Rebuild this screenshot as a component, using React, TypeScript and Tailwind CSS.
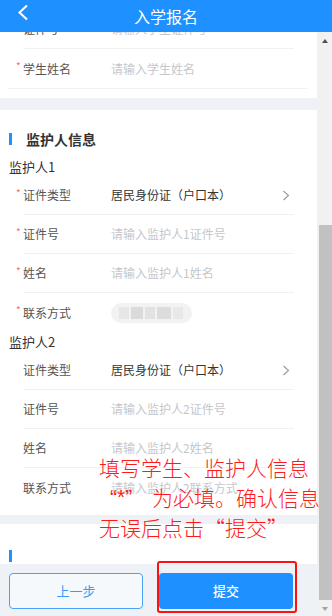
import React from 'react'

const font = { fontFamily: '"Noto Sans CJK SC", "Microsoft YaHei", sans-serif' }

interface RowProps {
  label: string
  required?: boolean
  value?: string
  placeholder?: string
  arrow?: boolean
  border?: boolean
  blurred?: boolean
}

function Chevron() {
  return (
    <svg width="8" height="11" viewBox="0 0 8 11" className="mr-[4px] shrink-0">
      <polyline points="1.5,1 6.5,5.5 1.5,10" fill="none" stroke="#9a9a9a" strokeWidth="1.1" />
    </svg>
  )
}

function Row({ label, required, value, placeholder, arrow, border = true, blurred }: RowProps) {
  return (
    <div className="flex pl-[16px] pr-[23px]">
      <span className="w-[7px] pt-[12px] text-[10px] leading-none text-[#f56c6c]">{required ? '*' : ''}</span>
      <div className={`flex-1 h-[39px] flex items-center ${border ? 'border-b border-[#f0f1f3]' : ''}`}>
        <span className="w-[88px] shrink-0 text-[12px] text-[#555]">{label}</span>
        {blurred ? (
          <div className="w-[81px] h-[20px] rounded-full bg-[#f2f2f2] flex items-center px-[8px] gap-[2px] blur-[0.6px]">
            <div className="h-[12px] w-[10px] bg-[#e6e6e6]" />
            <div className="h-[12px] w-[12px] bg-[#dadada]" />
            <div className="h-[12px] w-[10px] bg-[#e2e2e2]" />
            <div className="h-[12px] w-[14px] bg-[#dcdcdc]" />
            <div className="h-[12px] w-[10px] bg-[#e8e8e8]" />
          </div>
        ) : value ? (
          <span className="flex-1 text-[12px] text-[#333]">{value}</span>
        ) : (
          <span className="flex-1 text-[12px] text-[#c4c7cc]">{placeholder}</span>
        )}
        {arrow && <Chevron />}
      </div>
    </div>
  )
}

export default function App() {
  return (
    <div className="relative w-[332px] h-[616px] flex flex-col overflow-hidden bg-[#eef2f6]" style={font}>
      <div className="relative z-10 h-[32px] shrink-0 bg-[#1e90ff] flex items-center justify-center">
        <svg width="12" height="18" viewBox="0 0 12 18" className="absolute left-[17px] top-[4px]">
          <polyline points="10,1.5 2.5,8.5 10,15.5" fill="none" stroke="#fff" strokeWidth="2" />
        </svg>
        <span className="text-[16px] leading-none text-white">入学报名</span>
      </div>

      <div className="flex flex-1 min-h-0">
        <div className="w-[317px] flex flex-col">
          <div className="flex-1 min-h-0 overflow-hidden">
            <div className="-mt-[22px]">
              <div className="bg-white pb-[9px]">
                <Row label="证件号" required placeholder="请输入学生证件号" />
                <Row label="学生姓名" required placeholder="请输入学生姓名" border={false} />
                <div className="ml-[8px] mr-[10px] h-px bg-[#f0f1f3]" />
              </div>

              <div className="mt-[12px] bg-white pt-[20px] pb-[8px]">
                <div className="flex items-center h-[18px]">
                  <div className="ml-[9px] w-[3px] h-[12px] bg-[#1e90ff]" />
                  <span className="ml-[14px] text-[14px] font-bold text-[#333]">监护人信息</span>
                </div>
                <div className="mt-[10px] h-[18px] pl-[9px] flex items-center text-[13px] text-[#333]">监护人1</div>
                <Row label="证件类型" required value="居民身份证（户口本）" arrow />
                <Row label="证件号" required placeholder="请输入监护人1证件号" />
                <Row label="姓名" required placeholder="请输入监护人1姓名" />
                <Row label="联系方式" required blurred border={false} />
                <div className="h-[19px] pl-[9px] flex items-center text-[13px] text-[#333]">监护人2</div>
                <Row label="证件类型" value="居民身份证（户口本）" arrow />
                <Row label="证件号" placeholder="请输入监护人2证件号" />
                <Row label="姓名" placeholder="请输入监护人2姓名" />
                <Row label="联系方式" placeholder="请输入监护人2联系方式" border={false} />
              </div>

              <div className="mt-[9px] bg-white pt-[26px] h-[80px]">
                <div className="ml-[9px] w-[3px] h-[12px] bg-[#1e90ff]" />
              </div>
            </div>
          </div>

          <div className="h-[52px] shrink-0 bg-[#eef2f6] flex items-start pt-[9px] pl-[9px] gap-[16px]">
            <button className="w-[134px] h-[36px] rounded-[4px] border border-[#4aa3f7] bg-[#f6f9fc] text-[13px] text-[#3a9af5]">
              上一步
            </button>
            <button className="w-[134px] h-[36px] rounded-[4px] bg-[#1e90ff] text-[13px] font-medium text-white">
              提交
            </button>
          </div>
        </div>

        <div className="w-[15px] bg-[#f1f1f1] flex flex-col">
          <div className="h-[17px] flex items-start justify-center pt-[7px]">
            <div className="w-0 h-0 border-x-[3.5px] border-x-transparent border-b-[4px] border-b-[#505050]" />
          </div>
          <div className="h-[176px]" />
          <div className="ml-[2px] h-[375px] bg-[#c1c1c1]" />
          <div className="flex-1 flex items-start justify-center pt-[7px]">
            <div className="w-0 h-0 border-x-[3.5px] border-x-transparent border-t-[4px] border-t-[#a3a3a3]" />
          </div>
        </div>
      </div>

      <div className="absolute left-[99px] top-[452px] w-[233px] text-[21px] leading-[30px] font-light text-[#ff1a1a] whitespace-nowrap">
        <div>填写学生、监护人信息</div>
        <div className="flex">
          <span className="ml-[11px] w-[42px] shrink-0 font-['Liberation_Sans',sans-serif]">“*”</span>
          <span className="shrink-0">为必填。确认信息</span>
        </div>
        <div>无误后点击“提交”</div>
      </div>

      <div className="absolute left-[157px] top-[561px] w-[140px] h-[52px] rounded-[3px] border-[2px] border-[#ff1010]" />
    </div>
  )
}
